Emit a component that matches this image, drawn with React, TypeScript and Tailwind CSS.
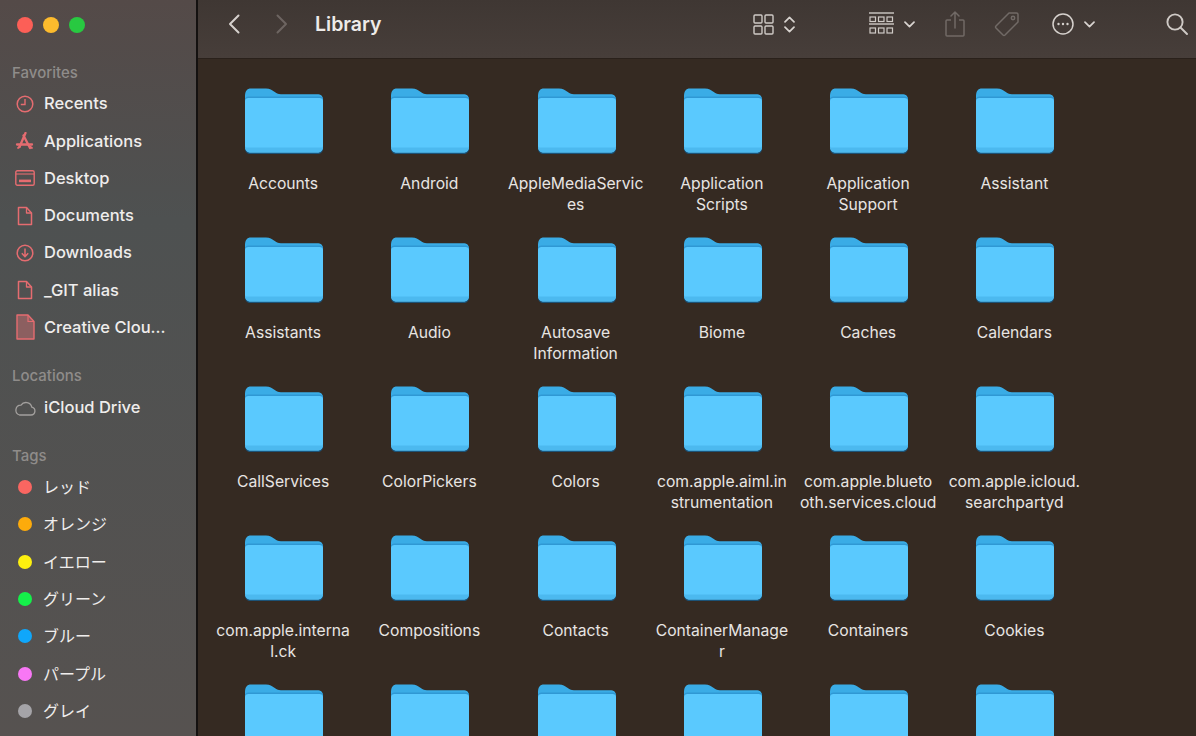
import React from "react";

const ROSE = "#e56c70";

const Ico = ({ children, w = 20, h = 20, vb, cls = "" }: { children: React.ReactNode; w?: number; h?: number; vb?: string; cls?: string }) => (
  <svg width={w} height={h} viewBox={vb ?? `0 0 ${w} ${h}`} fill="none" className={cls}>
    {children}
  </svg>
);

const FileIcon = () => (
  <Ico w={16} h={20}>
    <path d="M1.5 1.5h8l5 5.5v11.5h-13z" stroke={ROSE} strokeWidth="1.5" strokeLinejoin="round" />
    <path d="M9.5 1.5v5.5h5" stroke={ROSE} strokeWidth="1.3" strokeLinejoin="round" />
  </Ico>
);

const favorites: [string, React.ReactNode][] = [
  ["Recents", <Ico key="r" w={18} h={18}><circle cx="9" cy="9" r="7.8" stroke={ROSE} strokeWidth="1.5" /><path d="M9 4v5.5H4.8" stroke={ROSE} strokeWidth="1.4" /></Ico>],
  ["Applications", <Ico key="a" w={20} h={18}><path d="M10.5 1 4.5 15M8.5 3.5 15 16" stroke={ROSE} strokeWidth="2.3" strokeLinecap="round" /><path d="M2 12.5h15" stroke={ROSE} strokeWidth="2.3" strokeLinecap="round" /><path d="M3 16l2-1.5M17 16l-2-1.5" stroke={ROSE} strokeWidth="1.8" strokeLinecap="round" /></Ico>],
  ["Desktop", <Ico key="d" w={20} h={16}><rect x="0.8" y="0.8" width="18.4" height="14.4" rx="1.5" stroke={ROSE} strokeWidth="1.4" /><path d="M1 4h18" stroke={ROSE} strokeWidth="1.1" /><rect x="4" y="9.6" width="12" height="2.6" fill={ROSE} /></Ico>],
  ["Documents", <FileIcon key="f1" />],
  ["Downloads", <Ico key="dl" w={18} h={18}><circle cx="9" cy="9" r="7.8" stroke={ROSE} strokeWidth="1.5" /><path d="M9 4.5v8M5.8 9.3 9 12.6l3.2-3.3" stroke={ROSE} strokeWidth="1.5" /></Ico>],
  ["_GIT alias", <FileIcon key="f2" />],
  ["Creative Clou...", <Ico key="c" w={19} h={26}><path d="M1 1h11l6 6.5V25H1z" fill="#8c5f60" stroke={ROSE} strokeWidth="1.4" strokeLinejoin="round" /><path d="M12 1v6.5h6" stroke={ROSE} strokeWidth="1.2" /></Ico>],
];

const tags: [string, string][] = [
  ["レッド", "bg-[#fa6661]"],
  ["オレンジ", "bg-[#fdab0b]"],
  ["イエロー", "bg-[#fdf00f]"],
  ["グリーン", "bg-[#14f04a]"],
  ["ブルー", "bg-[#0fa7fb]"],
  ["パープル", "bg-[#f877f5]"],
  ["グレイ", "bg-[#a5a4a8]"],
];

const folders = [
  "Accounts", "Android", "AppleMediaServic\nes", "Application\nScripts", "Application\nSupport", "Assistant",
  "Assistants", "Audio", "Autosave\nInformation", "Biome", "Caches", "Calendars",
  "CallServices", "ColorPickers", "Colors", "com.apple.aiml.in\nstrumentation", "com.apple.blueto\noth.services.cloud", "com.apple.icloud.\nsearchpartyd",
  "com.apple.interna\nl.ck", "Compositions", "Contacts", "ContainerManage\nr", "Containers", "Cookies",
  "", "", "", "", "", "",
];

const Folder = () => (
  <svg width="80" height="67" viewBox="0 0 80 67" fill="none">
    <path d="M1 8C1 3 3 0.5 7 0.5H22C26 0.5 28 2 30 3.6C32 5.2 34 6.3 37 6.3H73C77 6.3 79 8 79 12V30H1z" fill="#3aace6" />
    <path d="M1 11.5C1 9.5 2.5 8.5 4.5 8.5H75.5C77.5 8.5 79 9.5 79 11.5V30H1z" fill="#2f98d4" />
    <path d="M1 40H79V60C79 64 77 66 73 66H7C3 66 1 64 1 60z" fill="#1c5378" />
    <path d="M1 13C1 11 2.5 10 4.5 10H75.5C77.5 10 79 11 79 13V58C79 62 77 64.5 73 64.5H7C3 64.5 1 62 1 58z" fill="#5ac9fe" />
    <path d="M1 59.5H79C79 62 77 64.6 73 64.6H7C3 64.6 1 62 1 59.5z" fill="#4cb9ef" />
  </svg>
);

const Chevron = ({ up = false, dim = false }: { up?: boolean; dim?: boolean }) => (
  <svg width="11" height="7" viewBox="0 0 11 7" fill="none" className={up ? "rotate-180" : ""}>
    <path d="M1 1.2 5.5 5.6 10 1.2" stroke={dim ? "#8d8682" : "#d8d3cf"} strokeWidth="1.7" strokeLinecap="round" strokeLinejoin="round" />
  </svg>
);

const Section = ({ title, className }: { title: string; className: string }) => (
  <div className={`pl-3 text-[15px] leading-[20px] font-medium text-[#8f8c8a] ${className}`}>{title}</div>
);

export default function App() {
  return (
    <div className="flex h-[736px] w-[1196px] overflow-hidden bg-[#352a22] font-['Inter','Noto_Sans_CJK_JP',sans-serif]">
      <aside className="flex w-[198px] shrink-0 flex-col border-r-2 border-[#141110] bg-gradient-to-b from-[#544a48] via-[#4e5151] via-30% to-[#565250] text-[#efedec]">
        <div className="flex gap-[10px] pl-[17px] pt-[17px]">
          <span className="h-4 w-4 rounded-full bg-[#fc5f57]" />
          <span className="h-4 w-4 rounded-full bg-[#fdbb2d]" />
          <span className="h-4 w-4 rounded-full bg-[#28c941]" />
        </div>
        <Section title="Favorites" className="mt-[30px]" />
        <div className="mt-[2px]">
          {favorites.map(([name, icon]) => (
            <div key={name} className="flex h-[37.3px] items-center">
              <div className="flex w-[44px] shrink-0 justify-center pl-[6px]">{icon}</div>
              <span className="whitespace-nowrap text-[16.5px] font-medium">{name}</span>
            </div>
          ))}
        </div>
        <Section title="Locations" className="mt-[20px]" />
        <div className="mt-[3px] flex h-[37.3px] items-center">
          <div className="flex w-[44px] shrink-0 justify-center pl-[5px]">
            <Ico w={22} h={16}>
              <path d="M5.5 15h11.5a4 4 0 0 0 .8-7.9A6 6 0 0 0 7 5.2 5 5 0 0 0 5.5 15z" stroke="#a3a09e" strokeWidth="1.3" />
            </Ico>
          </div>
          <span className="text-[16.5px] font-medium">iCloud Drive</span>
        </div>
        <Section title="Tags" className="mt-[20px]" />
        <div className="mt-[2px]">
          {tags.map(([name, color]) => (
            <div key={name} className="flex h-[37.3px] items-center">
              <div className="flex w-[43px] shrink-0 justify-center pl-[6px]">
                <span className={`h-[14px] w-[14px] rounded-full ${color}`} />
              </div>
              <span className="text-[16px]">{name}</span>
            </div>
          ))}
        </div>
      </aside>

      <main className="flex min-w-0 flex-1 flex-col">
        <header className="flex h-[59px] shrink-0 items-center border-b border-[#2a211b] bg-gradient-to-b from-[#3f3733] to-[#473e3a] pb-[10px] pl-[30px]">
          <svg width="12" height="20" viewBox="0 0 12 20" fill="none">
            <path d="M10.5 1.5 2 10l8.5 8.5" stroke="#d6d1cd" strokeWidth="2" strokeLinecap="round" strokeLinejoin="round" />
          </svg>
          <svg width="12" height="20" viewBox="0 0 12 20" fill="none" className="ml-[36px]">
            <path d="M1.5 1.5 10 10l-8.5 8.5" stroke="#6d6561" strokeWidth="2" strokeLinecap="round" strokeLinejoin="round" />
          </svg>
          <h1 className="ml-[27px] mt-[2px] text-[19.5px] font-semibold text-[#eeebe9]">Library</h1>

          <svg width="21" height="21" viewBox="0 0 21 21" fill="none" className="ml-[371px] mt-[1px]" stroke="#cfcac6" strokeWidth="1.4">
            <rect x="1" y="1" width="8" height="8" rx="1" />
            <rect x="12" y="1" width="8" height="8" rx="1" />
            <rect x="1" y="12" width="8" height="8" rx="1" />
            <rect x="12" y="12" width="8" height="8" rx="1" />
          </svg>
          <div className="ml-[10px] flex flex-col gap-[3px]">
            <Chevron up />
            <Chevron />
          </div>
          <svg width="25" height="24" viewBox="0 0 25 24" fill="none" className="ml-[74px]" stroke="#cfcac6">
            <path d="M0 1h25" strokeWidth="1.4" />
            <path d="M0 12h25" strokeWidth="1.4" />
            <rect x="1" y="5" width="5.5" height="4.5" strokeWidth="1.2" />
            <rect x="9.5" y="5" width="5.5" height="4.5" strokeWidth="1.2" />
            <rect x="18" y="5" width="5.5" height="4.5" strokeWidth="1.2" />
            <rect x="1" y="16" width="5.5" height="5" strokeWidth="1.2" />
            <rect x="9.5" y="16" width="5.5" height="5" strokeWidth="1.2" />
            <rect x="18" y="16" width="5.5" height="5" strokeWidth="1.2" />
          </svg>
          <div className="ml-[10px]"><Chevron /></div>
          <svg width="20" height="26" viewBox="0 0 20 26" fill="none" className="ml-[30px]" stroke="#716a66" strokeWidth="1.5">
            <path d="M6 9H2a1 1 0 0 0-1 1v14a1 1 0 0 0 1 1h16a1 1 0 0 0 1-1V10a1 1 0 0 0-1-1h-4" />
            <path d="M10 17V1.5M6 5l4-4 4 4" strokeLinecap="round" strokeLinejoin="round" />
          </svg>
          <svg width="26" height="26" viewBox="0 0 26 26" fill="none" className="ml-[29px]" stroke="#716a66" strokeWidth="1.5">
            <path d="M15 2h7.5a1.5 1.5 0 0 1 1.5 1.5V11L11 24a1.5 1.5 0 0 1-2 0L2 17a1.5 1.5 0 0 1 0-2z" strokeLinejoin="round" />
            <circle cx="19" cy="7" r="1.7" />
          </svg>
          <svg width="22" height="22" viewBox="0 0 22 22" fill="none" className="ml-[32px]">
            <circle cx="11" cy="11" r="10" stroke="#d6d1cd" strokeWidth="1.5" />
            <circle cx="6.5" cy="11" r="1.2" fill="#d6d1cd" />
            <circle cx="11" cy="11" r="1.2" fill="#d6d1cd" />
            <circle cx="15.5" cy="11" r="1.2" fill="#d6d1cd" />
          </svg>
          <div className="ml-[10px]"><Chevron /></div>
          <svg width="22" height="22" viewBox="0 0 22 22" fill="none" className="ml-[71px] shrink-0" stroke="#cfcac6" strokeWidth="1.9">
            <circle cx="9" cy="9" r="7.6" />
            <path d="M14.5 14.5 21 21" strokeLinecap="round" />
          </svg>
        </header>

        <div className="grid min-h-0 flex-1 grid-cols-[repeat(6,146.25px)] auto-rows-[149px] overflow-hidden pl-[12px] pt-[29px]">
          {folders.map((label, i) => (
            <div key={i} className="flex flex-col items-center">
              <div className="h-[67px] pl-[2px]"><Folder /></div>
              <div className="mt-[18px] whitespace-pre-line text-center text-[15.7px] leading-[21px] text-[#e8e5e2]">{label}</div>
            </div>
          ))}
        </div>
      </main>
    </div>
  );
}
